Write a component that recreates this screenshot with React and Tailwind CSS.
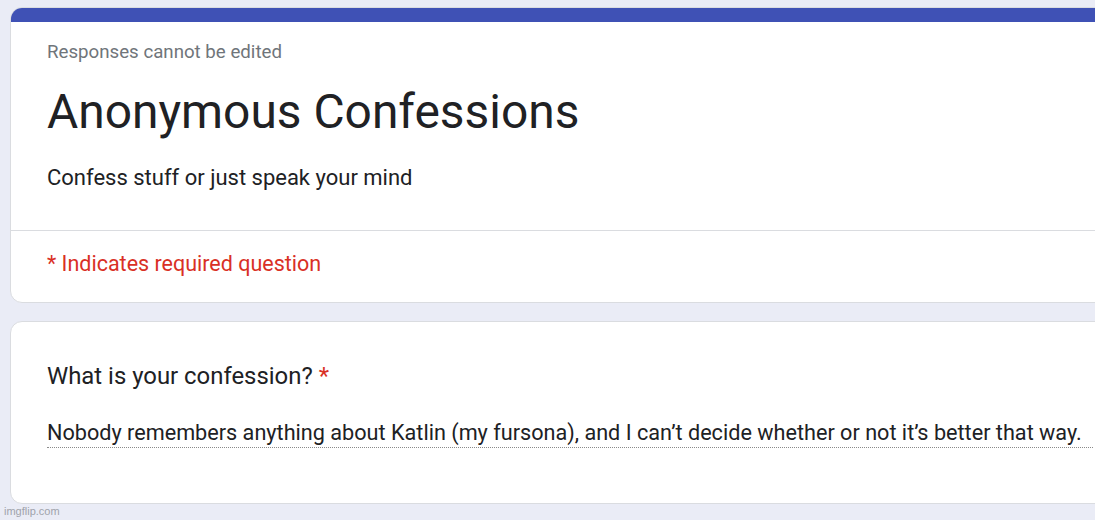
export default function App() {
  return (
    <div className="relative h-[520px] w-[1095px] overflow-hidden bg-[#eaecf6]" style={{ fontFamily: "Roboto, 'Noto Sans', sans-serif" }}>
      <div className="flex w-[1120px] flex-col gap-[18px] pl-[10px] pt-[7px]">
        <div className="flex flex-col overflow-hidden rounded-[12px] border border-[#dadce0] bg-white">
          <div className="-mx-px -mt-px h-[15px] bg-[#3f51b5]"></div>
          <div className="flex flex-col pl-[36px] pt-[18px]">
            <div className="text-[18.7px] leading-[24px] text-[#70757a]">Responses cannot be edited</div>
            <div className="mt-[20px] text-[47.9px] leading-[56px] text-[#202124]">Anonymous Confessions</div>
            <div className="mt-[24px] text-[22px] leading-[28px] text-[#202124]">Confess stuff or just speak your mind</div>
          </div>
          <div className="mt-[38px] h-px bg-[#dadce0]"></div>
          <div className="pb-[24px] pl-[36px] pt-[19px] text-[21.5px] leading-[28px] text-[#d93025]">* Indicates required question</div>
        </div>
        <div className="flex h-[183px] flex-col rounded-[12px] border border-[#dadce0] bg-white pl-[36px] pt-[39px]">
          <div className="text-[23.9px] leading-[30px] text-[#202124]">
            What is your confession? <span className="text-[#d93025]">*</span>
          </div>
          <div className="mt-[28px] w-[1046px] whitespace-nowrap border-b border-dotted border-[#8a8a8a] text-[21.65px] leading-[28px] text-[#202124]">
            Nobody remembers anything about Katlin (my fursona), and I can’t decide whether or not it’s better that way.
          </div>
        </div>
      </div>
      <div className="absolute bottom-[3px] left-[4px] text-[11px] leading-[12px] text-[#a0a3ab]" style={{ fontFamily: "'Liberation Sans', Arial, sans-serif" }}>imgflip.com</div>
    </div>
  );
}
